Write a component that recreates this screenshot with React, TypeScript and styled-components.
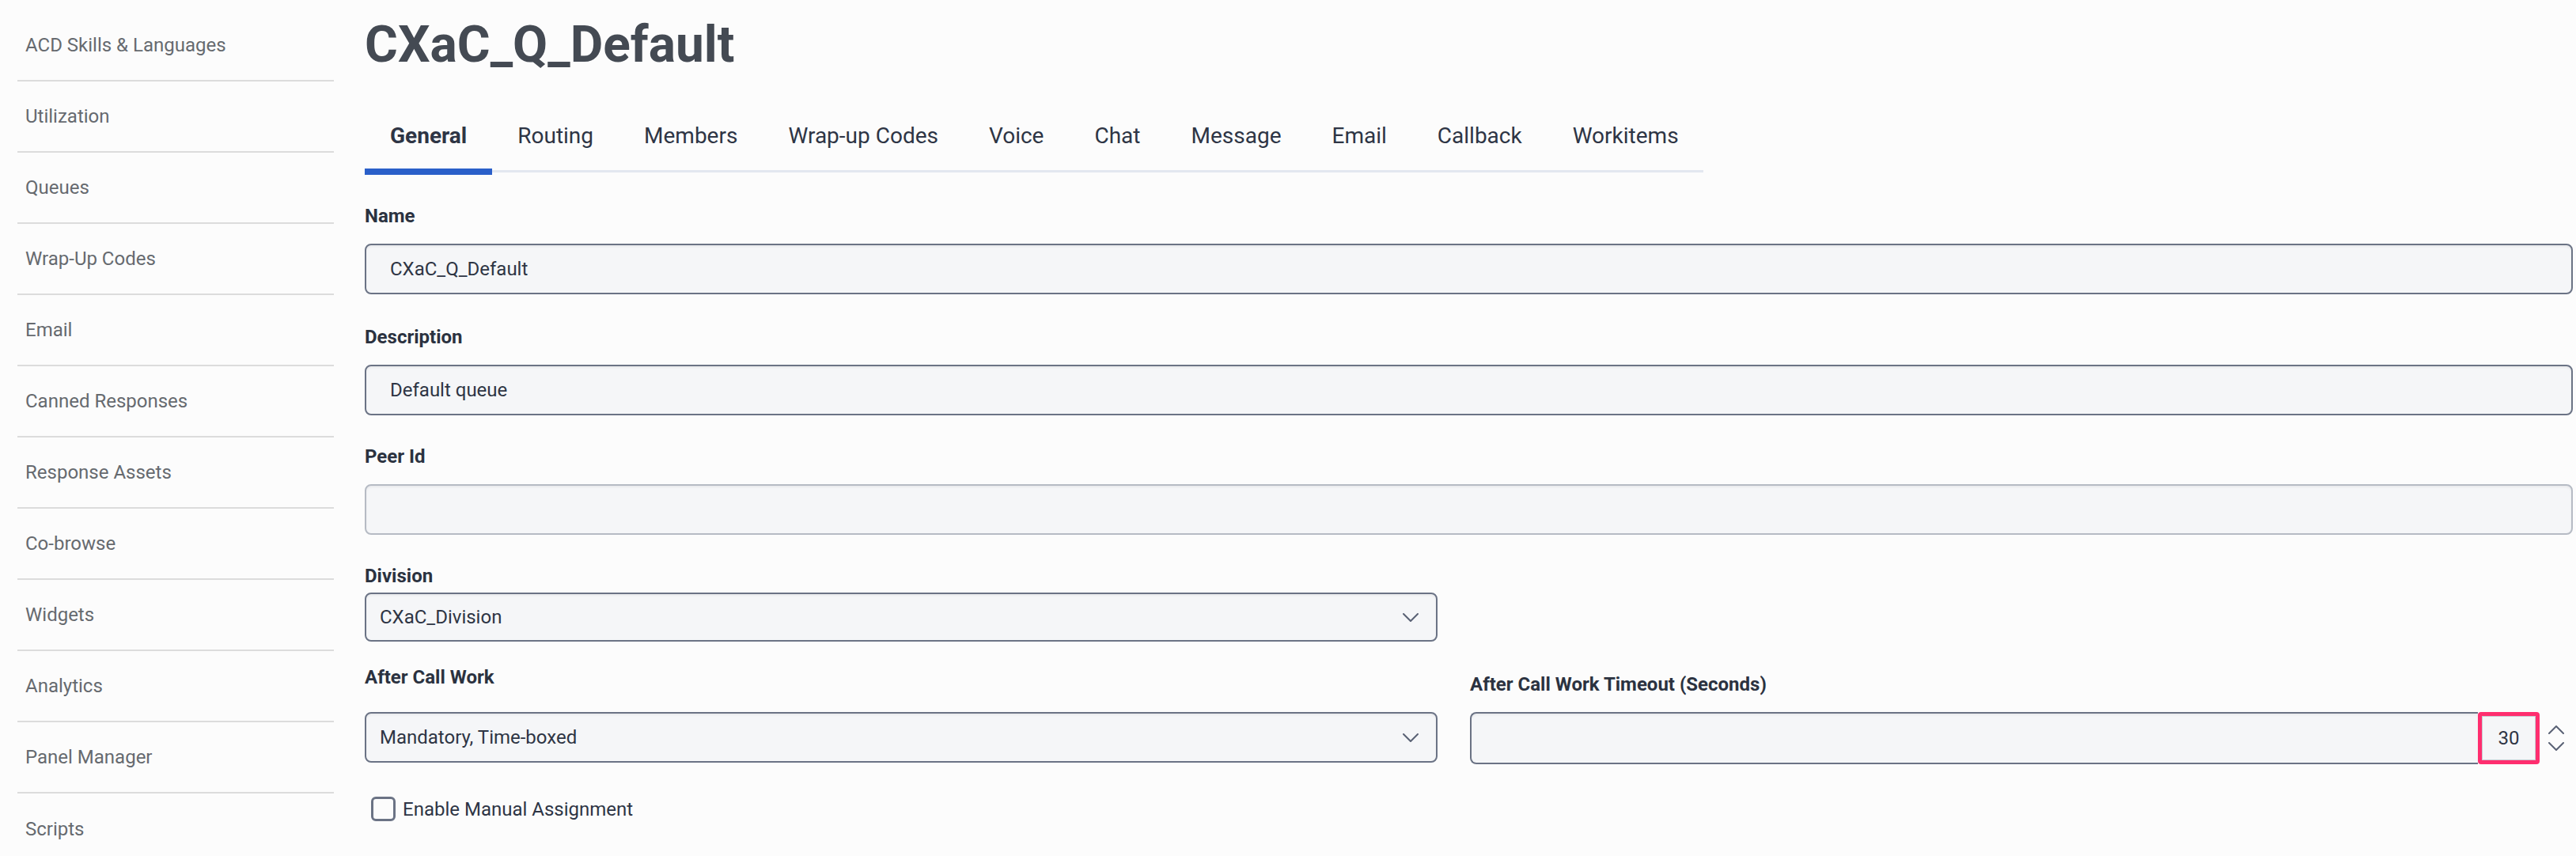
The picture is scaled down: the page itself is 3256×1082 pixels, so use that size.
import styled, { createGlobalStyle } from 'styled-components';

const NAV_ITEMS = [
  'ACD Skills & Languages',
  'Utilization',
  'Queues',
  'Wrap-Up Codes',
  'Email',
  'Canned Responses',
  'Response Assets',
  'Co-browse',
  'Widgets',
  'Analytics',
  'Panel Manager',
  'Scripts',
];

const TABS = ['General', 'Routing', 'Members', 'Wrap-up Codes', 'Voice', 'Chat', 'Message', 'Email', 'Callback', 'Workitems'];

const GlobalStyle = createGlobalStyle`
  html, body {
    margin: 0;
    padding: 0;
    background: #fcfcfc;
    font-family: Roboto, "Liberation Sans", Arial, sans-serif;
    overflow: hidden;
  }
  * { box-sizing: border-box; }
`;

const Page = styled.div`
  display: flex;
  width: 3256px;
  height: 1082px;
  background: #fcfcfc;
`;

const Sidebar = styled.nav`
  width: 461px;
  flex-shrink: 0;
  padding: 13px 39px 0 22px;
`;

const NavItem = styled.div`
  height: 90px;
  padding-left: 10px;
  display: flex;
  align-items: center;
  font-size: 24px;
  color: #666a6f;
  border-bottom: 2px solid #dcdcdc;
  &:last-child { border-bottom: none; }
`;

const Main = styled.main`
  flex: 1;
  padding-right: 4px;
`;

const Title = styled.h1`
  margin: 18px 0 0;
  font-size: 64px;
  line-height: 77px;
  font-weight: 700;
  color: #444a53;
`;

const TabBar = styled.div`
  margin-top: 30px;
  width: 1692px;
  display: flex;
  border-bottom: 3px solid #e3e7f0;
`;

const Tab = styled.div<{ active?: boolean }>`
  position: relative;
  flex-shrink: 0;
  white-space: nowrap;
  padding: 30px 32px 26px;
  font-size: 28px;
  line-height: 34px;
  font-weight: ${({ active }) => (active ? 700 : 400)};
  color: #2e3545;
  &::after {
    content: '';
    display: ${({ active }) => (active ? 'block' : 'none')};
    position: absolute;
    left: 0;
    right: 0;
    bottom: -6px;
    height: 8px;
    background: #2a5fc9;
  }
`;

const Form = styled.div`
  margin-top: 41px;
  display: flex;
  flex-direction: column;
`;

const Field = styled.div<{ after?: number }>`
  display: flex;
  flex-direction: column;
  margin-bottom: ${({ after }) => after ?? 40}px;
`;

const Label = styled.div<{ gap?: number; offset?: number }>`
  font-size: 24px;
  line-height: 28px;
  font-weight: 700;
  color: #2b3240;
  margin-top: ${({ offset }) => offset ?? 0}px;
  margin-bottom: ${({ gap }) => gap ?? 21}px;
`;

const TextBox = styled.div<{ muted?: boolean; pad?: number; h?: number }>`
  height: ${({ h }) => h ?? 64}px;
  display: flex;
  align-items: center;
  padding-left: ${({ pad }) => pad ?? 30}px;
  border: 2px solid ${({ muted }) => (muted ? '#b6bbc4' : '#6b7385')};
  border-radius: 8px;
  background: #f5f6f8;
  box-shadow: inset 0 2px 3px rgba(0, 0, 0, 0.05);
  font-size: 24px;
  color: #2e3544;
`;

const SelectBox = styled(TextBox)`
  justify-content: space-between;
  padding-right: 22px;
`;

const Columns = styled.div`
  display: grid;
  grid-template-columns: 1356px 1fr;
  column-gap: 41px;
`;

const NumberRow = styled.div`
  display: flex;
  align-items: stretch;
  height: 66px;
`;

const NumberTrack = styled.div`
  flex: 1;
  border: 2px solid #6b7385;
  border-right: none;
  border-radius: 8px 0 0 8px;
  background: #f5f6f8;
  box-shadow: inset 0 2px 3px rgba(0, 0, 0, 0.05);
`;

const NumberValue = styled.div`
  width: 78px;
  border: 5px solid #ff2e6f;
  border-radius: 4px;
  background: #f5f6f8;
  box-shadow: inset 0 0 0 1px #c8cbd2;
  display: flex;
  align-items: center;
  justify-content: center;
  font-size: 24px;
  color: #2e3544;
`;

const Spinner = styled.div`
  width: 42px;
  display: flex;
  flex-direction: column;
  align-items: center;
  justify-content: center;
  gap: 10px;
`;

const CheckRow = styled.label`
  display: flex;
  align-items: center;
  gap: 9px;
  padding-left: 8px;
  font-size: 24px;
  color: #2e3545;
`;

const CheckBox = styled.span`
  width: 31px;
  height: 31px;
  border: 3px solid #6b7385;
  border-radius: 6px;
  background: #fcfcfc;
`;

function Chevron({ up }: { up?: boolean }) {
  return (
    <svg width="20" height="11" viewBox="0 0 20 11" fill="none">
      <path
        d={up ? 'M1 10 L10 1 L19 10' : 'M1 1 L10 10 L19 1'}
        stroke="#5a6275"
        strokeWidth="2"
        strokeLinecap="round"
        strokeLinejoin="round"
      />
    </svg>
  );
}

export default function App() {
  return (
    <Page>
      <GlobalStyle />
      <Sidebar>
        {NAV_ITEMS.map((item) => (
          <NavItem key={item}>{item}</NavItem>
        ))}
      </Sidebar>

      <Main>
        <Title>CXaC_Q_Default</Title>

        <TabBar>
          {TABS.map((t, i) => (
            <Tab key={t} active={i === 0}>{t}</Tab>
          ))}
        </TabBar>

        <Form>
          <Field after={40}>
            <Label>Name</Label>
            <TextBox>CXaC_Q_Default</TextBox>
          </Field>
          <Field after={38}>
            <Label>Description</Label>
            <TextBox>Default queue</TextBox>
          </Field>
          <Field after={38}>
            <Label>Peer Id</Label>
            <TextBox muted />
          </Field>

          <Columns>
            <Field after={31}>
              <Label gap={7}>Division</Label>
              <SelectBox pad={17} h={62}>
                CXaC_Division
                <Chevron />
              </SelectBox>
            </Field>
            <div />

            <Field after={41}>
              <Label gap={30}>After Call Work</Label>
              <SelectBox pad={17}>
                Mandatory, Time-boxed
                <Chevron />
              </SelectBox>
            </Field>
            <Field after={41}>
              <Label gap={21} offset={9}>After Call Work Timeout (Seconds)</Label>
              <NumberRow>
                <NumberTrack />
                <NumberValue>30</NumberValue>
                <Spinner>
                  <Chevron up />
                  <Chevron />
                </Spinner>
              </NumberRow>
            </Field>
          </Columns>

          <CheckRow>
            <CheckBox />
            Enable Manual Assignment
          </CheckRow>
        </Form>
      </Main>
    </Page>
  );
}
